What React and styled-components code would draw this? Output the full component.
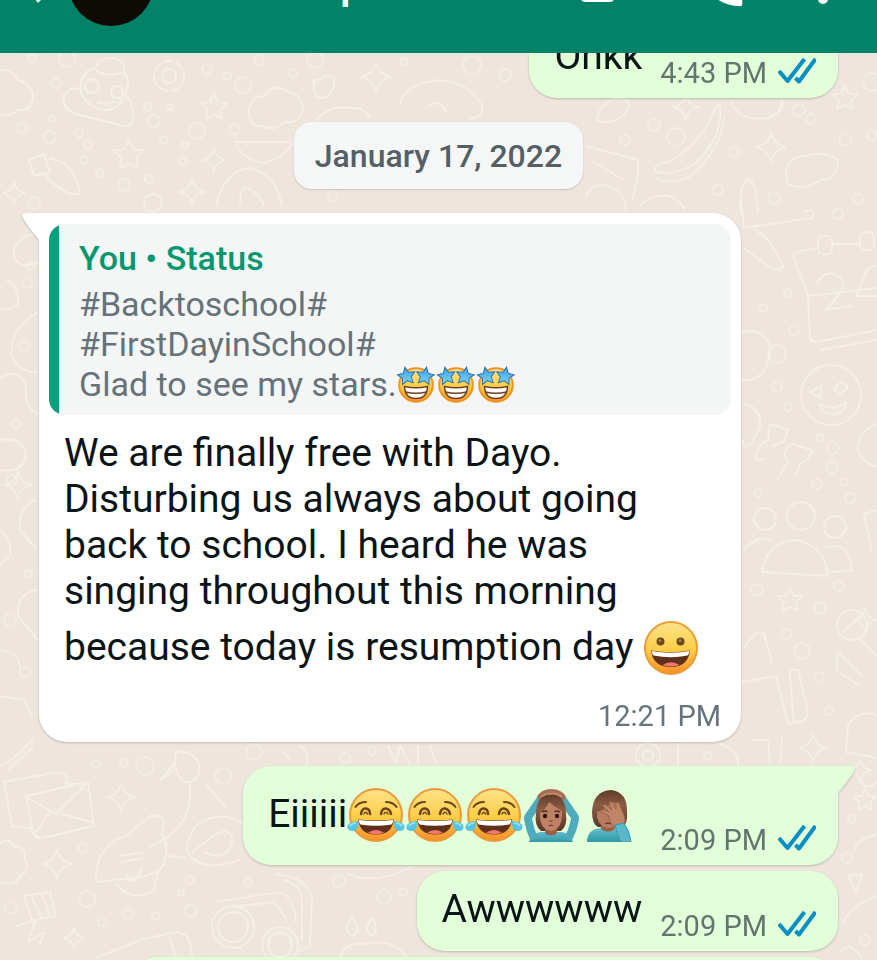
import React from 'react'
import styled, { createGlobalStyle } from 'styled-components'

const GlobalStyle = createGlobalStyle`
    * {
        box-sizing: border-box;
    }

    body {
        margin: 0;
        font-family: Roboto, "Noto Sans", sans-serif;
        color: #0b1417;
    }
`;

const Screen = styled.div`
    height: 100vh;
    display: flex;
    flex-direction: column;
    overflow: hidden;
    background: #eee6dd;
`;

const TopBar = styled.header`
    flex: none;
    height: 53px;
    display: flex;
    align-items: flex-end;
    overflow: hidden;
    background: #03826a;
    position: relative;
    z-index: 1;
`;

const Toolbar = styled.div`
    flex: 1;
    height: 140px;
    padding: 0 22px 0 12px;
    display: flex;
    align-items: center;
`;

const IconButton = styled.button`
    width: ${props => props.$width || 64}px;
    height: 64px;
    padding: 0;
    border: 0;
    background: none;
    color: #fff;

    svg {
        display: block;
        width: 100%;
        height: 100%;
    }
`;

const Avatar = styled.div`
    width: 86px;
    height: 86px;
    border-radius: 50%;
    background: #0e0b05;
`;

const ContactName = styled.h1`
    flex: 1;
    margin: 0;
    padding-left: 186px;
    font-size: 44px;
    line-height: 52px;
    font-weight: 500;
    color: #fff;
`;

const Actions = styled.div`
    display: flex;
    gap: 47px;
`;

const Chat = styled.main`
    flex: 1;
    min-height: 0;
    display: grid;
    grid-template: minmax(0, 1fr) / minmax(0, 1fr);

    > * {
        grid-area: 1 / 1;
    }
`;

const WallpaperSvg = styled.svg`
    width: 100%;
    height: 100%;
    fill: none;
    stroke: #f5efe8;
    stroke-width: 2;
    stroke-linecap: round;
    stroke-linejoin: round;
`;

// scrolled, so the first message is partly under the top bar
const Messages = styled.div`
    margin-top: -35px;
    padding: 0 39px;
    display: flex;
    flex-direction: column;
    align-items: flex-start;
    gap: 24px;
`;

const Group = styled.div`
    align-self: ${props => props.$align};
    max-width: 100%;
    display: flex;
    flex-direction: column;
    align-items: flex-end;
    gap: 6px;
`;

const DatePill = styled.time`
    align-self: center;
    padding: 16px 21px 15px;
    border-radius: 18px;
    background: #f5f7f7;
    box-shadow: 0 1px 2px rgba(0, 0, 0, 0.16);
    font-size: 32px;
    line-height: 36px;
    font-weight: 500;
    color: #545f66;
`;

const Bubble = styled.div`
    position: relative;
    flex: none;
    border-radius: 28px;
    filter: drop-shadow(0 1px 1px rgba(0, 0, 0, 0.2));
`;

const IncomingBubble = styled(Bubble)`
    max-width: 702px;
    padding: 11px 10px 8px;
    border-top-left-radius: 0;
    background: #fff;
`;

const OutgoingBubble = styled(Bubble)`
    min-width: ${props => props.$minWidth || 0}px;
    min-height: 80px;
    padding: 0 22px 7px 25px;
    display: flex;
    align-items: flex-end;
    gap: 18px;
    border-top-right-radius: ${props => props.$tail ? 0 : 28}px;
    background: #e3ffda;
`;

const TailSvg = styled.svg`
    position: absolute;
    top: 0;
    ${props => props.$side}: -17px;
    width: 18px;
    height: 28px;
`;

const Quote = styled.blockquote`
    margin: 0;
    padding: 14px 20px 11px 30px;
    border-radius: 16px;
    background: linear-gradient(90deg, #06a17d 10px, #f4f6f6 10px);
    font-size: 34px;
    line-height: 40px;
    color: #65727a;
`;

const QuoteAuthor = styled.div`
    margin-bottom: 6px;
    font-weight: 500;
    color: #06976f;
`;

const Text = styled.p`
    margin: 0;
    font-size: 39px;
    line-height: 46px;
`;

const IncomingText = styled(Text)`
    padding: 15px 15px 19px;
`;

const OutgoingText = styled(Text)`
    padding: 15px 0 12px;
    white-space: nowrap;
`;

const Meta = styled.div`
    display: flex;
    align-items: center;
    justify-content: flex-end;
    gap: 11px;
    font-size: 29px;
    line-height: 36px;
    white-space: nowrap;
    color: ${props => props.$outgoing ? '#62756f' : '#65747d'};
`;

const IncomingMeta = styled(Meta)`
    padding-right: 10px;
`;

const TicksSvg = styled.svg`
    width: 38px;
    height: 32px;
    fill: none;
    stroke: #0a8fc4;
    stroke-width: 4;
    stroke-linejoin: round;
`;

const EmojiSvg = styled.svg`
    width: ${props => props.$width || 59}px;
    height: 54px;
    margin: 7px 0 4px;
    vertical-align: -19px;
`;

const SmallEmojiSvg = styled.svg`
    width: 40px;
    height: 40px;
    vertical-align: -8px;
`;

const Ticks = () => (
    <TicksSvg viewBox="0 0 38 32" role="img" aria-label="Read">
        <path d="M1 14 L9.500 24 L26.500 2" />
        <path d="M17.500 21 L21 24.500 L37.500 2" />
    </TicksSvg>
)

const Tail = ({ side, color }) => (
    <TailSvg viewBox="0 0 18 28" $side={side} aria-hidden="true">
        <path
            d="M18 0 H4 Q-1 1 1 5 Q2 8 17 27 H18 Z"
            fill={color}
            transform={side === 'right' ? 'matrix(-1 0 0 1 18 0)' : undefined}
        />
    </TailSvg>
)

const EmojiDefs = () => (
    <svg width="0" height="0" style={{ display: 'block' }} aria-hidden="true">
        <defs>
            <linearGradient id="face" x1="0" y1="0" x2="0" y2="1">
                <stop offset="0" stopColor="#ffe38a" />
                <stop offset="0.55" stopColor="#fdcd45" />
                <stop offset="1" stopColor="#f58f28" />
            </linearGradient>
            <linearGradient id="star" x1="0" y1="0" x2="0" y2="1">
                <stop offset="0" stopColor="#3a9be6" />
                <stop offset="1" stopColor="#7cd4fb" />
            </linearGradient>
            <linearGradient id="hair" x1="0" y1="0" x2="0" y2="1">
                <stop offset="0" stopColor="#5f3b2b" />
                <stop offset="0.4" stopColor="#8a5c44" />
                <stop offset="1" stopColor="#5a3626" />
            </linearGradient>
            <linearGradient id="shirt" x1="0" y1="0" x2="0" y2="1">
                <stop offset="0" stopColor="#63bdcc" />
                <stop offset="1" stopColor="#3198aa" />
            </linearGradient>
        </defs>
    </svg>
)

const Grinning = () => (
    <EmojiSvg viewBox="0 0 56 54" $width={56} role="img" aria-label="Grinning face">
        <circle cx="28" cy="27" r="26" fill="url(#face)" stroke="#ec9c36" strokeWidth="2" />
        <circle cx="17.500" cy="20.500" r="4" fill="#6b4a1e" />
        <circle cx="37.500" cy="20.500" r="4" fill="#6b4a1e" />
        <circle cx="17" cy="19.500" r="1.300" fill="#b18a4c" />
        <circle cx="37" cy="19.500" r="1.300" fill="#b18a4c" />
        <path d="M8 29.500 Q28 33 47 29.500 Q45 46 28 46 Q10 46 8 29.500 Z" fill="#61301a" />
        <path d="M8.500 30 Q28 33.500 46.500 30 Q46 33 44.500 34.500 Q28 38 10.500 34.500 Q9 33 8.500 30 Z" fill="#fff" />
        <path d="M19.500 44 Q28 38.500 36.500 44 Q28 47 19.500 44 Z" fill="#f1776f" />
    </EmojiSvg>
)

const Joy = () => (
    <EmojiSvg viewBox="0 0 59 54" role="img" aria-label="Face with tears of joy">
        <circle cx="29" cy="27" r="26" fill="url(#face)" stroke="#ea9a3a" strokeWidth="2" />
        <g fill="none" stroke="#6b4417" strokeLinecap="round">
            <path d="M8.500 19 Q12 14 19 14" strokeWidth="2" />
            <path d="M39 14 Q46 14 49.500 19" strokeWidth="2" />
            <path d="M14 26 Q15 20 19 20.500 Q23 21 23 26" strokeWidth="2.500" />
            <path d="M34 26 Q35 20 39 20.500 Q43 21 44 26" strokeWidth="2.500" />
            <path d="M17 26 Q19 22.500 20.500 26 M37 26 Q39 22.500 41 26" strokeWidth="1.500" />
        </g>
        <path d="M11 31.500 Q29 33.500 47 31.500 Q45 46.500 29 46.500 Q13 46.500 11 31.500 Z" fill="#61301a" />
        <path d="M11.500 32 Q29 34 46.500 32 Q46 35 44.500 36.500 Q29 39 13.500 36.500 Q12 35 11.500 32 Z" fill="#fff" />
        <path d="M21 44.500 Q29 39.500 37 44.500 Q29 48 21 44.500 Z" fill="#f1776f" />
        <path d="M11 33 Q12 44 4.500 43 Q-1 42 1 37 Q3 33.500 11 33 Z" fill="#56c5e3" />
        <path d="M47 33 Q46 44 53.500 43 Q59 42 57 37 Q55 33.500 47 33 Z" fill="#56c5e3" />
        <path d="M3 38 Q5 35 9 35 M49 35 Q53 35 55 38" fill="none" stroke="#9be3f3" strokeWidth="1.500" />
    </EmojiSvg>
)

const STAR = 'M0 -9.500 L2.800 -3.500 L9.400 -2.800 L4.600 1.800 L5.800 8.200 L0 5.200 L-5.800 8.200 L-4.600 1.800 L-9.400 -2.800 L-2.800 -3.500 Z'

const StarStruck = () => (
    <SmallEmojiSvg viewBox="0 0 40 40" role="img" aria-label="Star-struck">
        <circle cx="19" cy="21" r="16.800" fill="url(#face)" stroke="#ef9524" strokeWidth="2" />
        <path d="M7.500 22.500 Q19 25 30.500 22.500 Q30 34.500 19 34.500 Q8 34.500 7.500 22.500 Z" fill="#fff" stroke="#6d4020" strokeWidth="1.500" />
        <path d="M8.500 28 Q19 30.500 29.500 28" fill="none" stroke="#6d4020" strokeWidth="1.500" />
        <path d={STAR} transform="translate(9.500 12) rotate(-10) scale(0.940)" fill="url(#star)" stroke="#2b6fa8" strokeWidth="1" />
        <path d={STAR} transform="translate(28 12) rotate(10) scale(0.940)" fill="url(#star)" stroke="#2b6fa8" strokeWidth="1" />
    </SmallEmojiSvg>
)

const WomanOk = () => (
    <EmojiSvg viewBox="0 0 60 54" $width={60} role="img" aria-label="Woman gesturing OK">
        <path d="M5 54 Q7 45 16 44 H38 Q47 45 49 54 Z" fill="url(#shirt)" />
        <path d="M10 51 Q6 42 4 31 Q4 28 7 25 L18 9" fill="none" stroke="#4fabbb" strokeWidth="8" />
        <path d="M44 51 Q49 42 51 31 Q51 28 48 25 L37 9" fill="none" stroke="#4fabbb" strokeWidth="8" />
        <path d="M13 9 Q17 1 27 1 Q38 1 42 9 L37 15 H18 Z" fill="#a96c54" />
        <path d="M27 6 Q42 7 42 26 Q44 37 37 43 H17 Q10 37 12 26 Q12 7 27 6 Z" fill="url(#hair)" />
        <path d="M21 38 H33 V45 Q27 50 21 45 Z" fill="#9b6249" />
        <path d="M16 25 Q22 21 25 14 Q31 19 38 23 Q39 41 27 43 Q15 41 16 25 Z" fill="#bd8163" />
        <path d="M18 24 Q21 22 23.500 24 M30.500 24 Q33 22 36 24" stroke="#50301f" strokeWidth="1.500" fill="none" />
        <circle cx="21" cy="28" r="2.200" fill="#2a1811" />
        <circle cx="33" cy="28" r="2.200" fill="#2a1811" />
        <path d="M25.500 32.500 Q27 34 28.500 32.500" fill="none" stroke="#865039" strokeWidth="1.300" />
        <path d="M24 38 Q27 35.500 30 38 Z" fill="#7a352e" />
        <path d="M17 9 Q22 5 26 6 Q32 4 38 9" fill="none" stroke="#c98f74" strokeWidth="1.500" />
    </EmojiSvg>
)

const WomanFacepalm = () => (
    <EmojiSvg viewBox="0 0 58 54" $width={58} role="img" aria-label="Woman facepalming">
        <path d="M3 54 Q3 41 17 40 H34 Q46 42 46 54 Z" fill="url(#shirt)" />
        <path d="M27 2 Q44 4 43 25 Q44 36 38 40 L14 39 Q8 36 8 24 Q9 3 27 2 Z" fill="url(#hair)" />
        <path d="M17 34 H30 V42 Q23 46 17 41 Z" fill="#9b6249" />
        <path d="M13 24 Q23 20 29 14 Q39 18 38 26 Q36 39 25 40 Q12 38 13 24 Z" fill="#b97b5f" />
        <path d="M21 36 Q24 34 27 36" stroke="#713b2d" strokeWidth="1.500" fill="none" />
        <path d="M31 39 Q24 34 25 28 L17 24 Q16 21 20 22 L25 24 L19 18 Q19 15 22 17 L28 22 L25 15 Q27 12 29 16 L32 21 L32 15 Q35 13 36 18 L40 27 Q42 33 40 39 Z" fill="#c08466" stroke="#99644c" strokeWidth="1" />
        <path d="M31 37 L40 35 Q46 44 47 54 H37 Q32 45 31 37 Z" fill="#5ab7c7" stroke="#3699aa" strokeWidth="1" />
    </EmojiSvg>
)

// small shapes scattered over the wallpaper: [x, y, radius]
const dots = [
    [32, 58, 4], [56, 83, 5], [67, 59, 8], [148, 107, 4], [170, 107, 3], [154, 121, 6], [52, 119, 3], [79, 133, 4],
    [50, 137, 6], [22, 128, 5], [88, 145, 4], [197, 131, 8], [235, 129, 5], [243, 85, 8], [227, 76, 4], [207, 69, 5],
    [164, 140, 4], [185, 145, 3], [100, 173, 4], [124, 185, 6], [149, 179, 4], [84, 160, 4], [183, 161, 4],
    [293, 73, 4], [259, 60, 5], [315, 60, 8], [404, 62, 4], [333, 196, 5], [34, 203, 6], [472, 65, 9], [505, 75, 6],
    [654, 125, 6], [625, 140, 5], [676, 137, 9], [734, 152, 5], [799, 110, 6], [845, 140, 6], [872, 135, 5],
    [718, 190, 5], [774, 198, 6], [858, 199, 5], [872, 82, 9], [811, 119, 5], [838, 214, 5], [788, 293, 4],
    [763, 308, 4], [794, 331, 5], [777, 354, 9], [777, 387, 5], [788, 407, 4], [820, 438, 4], [833, 448, 6],
    [832, 467, 6], [844, 482, 4], [850, 498, 5], [817, 484, 5], [758, 493, 4], [839, 586, 5], [757, 590, 6],
    [820, 608, 6], [787, 634, 5], [802, 651, 8], [708, 756, 4], [819, 677, 5], [829, 711, 4],
    [96, 764, 4], [124, 763, 4], [145, 766, 9], [223, 776, 8], [254, 752, 8], [345, 758, 5], [372, 751, 4],
    [83, 848, 5], [87, 899, 8], [11, 908, 6], [128, 914, 5], [156, 916, 4], [102, 922, 4], [248, 882, 4],
    [191, 911, 6], [190, 880, 4], [181, 893, 3], [339, 881, 6], [384, 897, 7], [403, 892, 4], [852, 819, 4],
    [847, 858, 5], [865, 940, 5], [24, 346, 5], [30, 266, 4], [27, 283, 5], [12, 480, 5], [28, 574, 4], [10, 620, 6],
    [16, 424, 4], [25, 672, 5]
]

const sparkles = [
    [376, 77, 15], [192, 192, 13], [214, 160, 12], [686, 107, 13], [771, 147, 15], [813, 748, 14], [121, 797, 14],
    [57, 864, 15], [74, 938, 11], [14, 193, 11], [18, 485, 14], [865, 620, 12], [860, 770, 11]
]

const stars = [
    [129, 155, 1.6], [214, 107, 1.4], [845, 98, 1.3], [790, 600, 1.3], [865, 800, 1.2]
]

const Wallpaper = () => (
    <WallpaperSvg viewBox="0 53 877 907" preserveAspectRatio="xMidYMin slice" aria-hidden="true">
        {dots.map(([x, y, r]) => <circle key={`${x}-${y}`} cx={x} cy={y} r={r} opacity="0.8" />)}
        {sparkles.map(([x, y, s]) => (
            <path
                key={`${x}-${y}`}
                d="M0 -1 Q0.150 -0.150 1 0 Q0.150 0.150 0 1 Q-0.150 0.150 -1 0 Q-0.150 -0.150 0 -1 Z"
                transform={`translate(${x} ${y}) scale(${s})`}
                strokeWidth={1.5 / s}
            />
        ))}
        {stars.map(([x, y, s]) => (
            <path key={`${x}-${y}`} d={STAR} transform={`translate(${x} ${y}) scale(${s})`} strokeWidth={1.8 / s} />
        ))}

        {/* cloud, hat, flower */}
        <path d="M0 70 Q14 70 18 80 Q34 86 33 98 Q30 112 18 110 Q8 118 0 114" />
        <path d="M64 95 Q72 85 82 90 M124 94 Q132 100 133 112 Q136 126 124 126 L84 116 Q60 112 64 95" />
        <path d="M82 96 Q76 72 96 68 Q98 58 112 58 Q126 60 124 72 Q132 82 124 96 Q118 110 106 110 Q92 110 82 96 Z" />
        <circle cx="92" cy="86" r="7" /><circle cx="117" cy="92" r="6" /><path d="M98 102 Q106 106 112 102 M96 71 Q110 78 124 72" />
        <circle cx="169" cy="76" r="7" /><circle cx="169" cy="76" r="15" strokeDasharray="9 4" />
        <path d="M249 112 Q250 96 264 96 Q274 82 288 92 Q306 96 302 112 Q298 124 284 122 Q276 132 262 126 Q250 128 249 112 Z" />
        <path d="M314 86 Q312 78 320 80 Q326 72 334 78 Q336 92 324 98 Q312 98 314 86 Z" />
        <path d="M316 120 Q330 104 352 108 Q366 108 370 118" />
        <path d="M400 104 Q404 84 440 80 Q472 84 482 106 Q484 118 470 118 M446 112 Q440 98 428 106" />
        <path d="M236 142 H290 M236 144 Q242 160 264 163 Q288 156 294 140 M216 206 Q224 170 250 168 Q276 174 282 206" />
        <path d="M240 204 Q240 182 252 190 Q260 196 264 206 M29 160 L44 154 L50 172 L34 176 Z M50 158 Q76 164 80 194 Q66 198 44 174" />
        <circle cx="153" cy="203" r="9" />

        {/* banana, glove, leaves */}
        <path d="M720 104 Q724 138 694 164 Q674 176 656 172 Q652 164 668 162 Q698 148 716 108 Z M724 118 Q720 152 690 176 Q672 186 656 178" />
        <path d="M597 120 Q600 100 622 98 Q634 102 624 114 Q612 126 597 120 Z M731 102 Q738 122 768 118 Q784 112 782 100" />
        <path d="M586 146 L638 160 Q640 176 632 200 M594 162 L624 180 M586 196 Q592 182 608 186 Q624 190 626 210 M640 206 Q650 194 668 196 Q682 200 684 210" />
        <path d="M786 172 Q788 156 806 156 Q824 150 838 160 Q838 180 820 180 Q804 192 788 184 Z M741 212 Q738 190 746 180 Q756 176 758 212" />
        <path d="M741 200 L744 228 L812 218 Q816 206 804 212 M756 230 L768 240 L784 266 Q778 272 768 266 L744 248" />

        {/* calendar */}
        <path d="M832 244 H858 M816 248 L796 252 Q793 254 794 258 L808 296 L810 338 Q811 342 816 342 L877 330 M808 296 L877 288 M820 350 L877 340" />
        <rect x="818" y="236" width="14" height="18" rx="5" /><rect x="860" y="232" width="14" height="18" rx="5" />
        <path d="M816 284 Q826 268 838 276 Q848 284 838 296 L826 310 L852 306 M856 296 L868 268 L877 266 M856 296 H877" />

        {/* round face, cactus, people */}
        <circle cx="831" cy="395" r="30" />
        <path d="M810 392 L822 386 L820 398 Z M834 390 Q842 376 848 388 L840 394 Z M820 404 Q834 412 846 402 Q844 416 830 414 Q820 412 820 404" />
        <path d="M742 332 Q764 328 770 346 M742 380 Q768 382 770 350 M744 404 Q762 408 760 428 L752 442 Q744 452 742 440" />
        <path d="M756 458 Q758 444 768 440 L770 424 L788 430 L784 442 L772 446 M778 478 L788 462 Q780 452 792 444 L812 450 Q812 458 800 464 L796 476 M765 459 L757 460" />
        <circle cx="765" cy="519" r="11" /><circle cx="801" cy="516" r="14" /><circle cx="835" cy="527" r="11" />
        <path d="M762 572 Q766 542 796 540 Q826 546 828 576 Z M744 550 Q758 534 772 540 M824 548 Q850 540 852 570 L832 572" />
        <path d="M877 424 Q856 432 858 452 Q866 466 877 466 M877 510 L864 514 L872 552" />

        {/* rattle, boat, bars */}
        <circle cx="852" cy="625" r="15" /><path d="M842 632 L862 616 M860 640 L877 656 M838 652 L862 676 M838 652 L836 670 L860 686" />
        <path d="M744 648 Q758 626 764 634 L772 662 M742 682 L776 676 L788 724 L800 722 M790 676 Q788 668 798 670 L808 712 Q806 724 794 722 Z" />
        <path d="M753 740 L768 740 L770 764 M782 738 L780 764 M848 724 L846 752 L877 758 M848 724 Q862 708 877 716" />
        <circle cx="648" cy="755" r="12" /><circle cx="648" cy="755" r="5" /><path d="M678 744 V766 M720 744 Q740 750 738 766" />

        {/* left column */}
        <path d="M38 232 Q12 238 14 258 Q22 270 38 262 M6 280 Q18 282 18 304 Q8 312 0 308 M38 312 Q8 330 12 356 Q20 374 38 372" />
        <path d="M0 378 Q22 366 26 388 Q24 408 38 414 M0 440 Q24 436 26 456 Q22 474 0 470 M36 500 Q18 506 20 530 L36 548 M0 530 Q12 540 10 556 L0 564" />
        <path d="M38 590 Q16 592 18 616 L38 640 M0 650 Q20 652 20 668 M0 696 L24 700 L32 716" />

        {/* envelope */}
        <path d="M2 766 L14 758 L34 738 M8 770 L34 746 M4 782 L58 772 Q70 774 66 784 L84 784 M4 782 L12 826 L30 828" />
        <path d="M26 796 L88 782 L94 826 L42 838 Q32 838 32 826 Z M28 798 L56 814 L86 784 M36 832 L50 812 M62 814 L92 822" />
        <path d="M0 844 Q8 836 14 846 Q28 848 24 858 Q32 870 20 876 Q14 888 4 882 L0 884" />

        {/* bird, rocket, bus */}
        <path d="M176 752 Q196 750 200 768 Q198 784 184 782 Q172 772 176 752 Z M172 772 L160 780 L174 764 M190 784 Q194 830 150 846" />
        <path d="M206 784 L226 808 M96 876 Q98 844 126 836 L150 816 Q168 812 162 834 Q172 852 160 870 Q150 876 134 878 L96 882 Z" />
        <path d="M120 856 L144 852 M122 862 L142 858 M126 874 Q134 890 142 868 M158 872 L154 890 Q134 904 116 884 M170 856 L186 858" />
        <path d="M242 822 Q216 810 196 826 Q182 846 190 856 Q204 872 240 860 M192 852 L216 834 Q234 826 232 844 Q224 862 204 852" />
        <path d="M24 896 L50 892 L56 916 L32 920 Z M16 926 L36 920 L28 942 L44 932 L40 944 M32 898 L42 918 M42 894 L50 916" />
        <circle cx="233" cy="927" r="21" /><circle cx="233" cy="927" r="15" /><circle cx="280" cy="945" r="18" /><circle cx="280" cy="945" r="12" />
        <path d="M216 902 L280 892 Q294 896 296 922 M240 906 L274 902 L286 918 M276 874 Q310 878 312 900 L310 946 L298 952 M284 880 Q302 884 302 904 V940" />
        <path d="M96 958 L140 940 L176 932 Q192 932 192 958 M170 938 L176 958 M348 874 Q376 886 412 866" />
        <path d="M352 918 Q342 930 352 936 Q364 930 352 918 Z M372 918 Q362 930 372 936 Q380 930 372 918 Z M340 956 Q348 940 366 944 Q392 938 406 956" />
        <path d="M282 750 L290 760 M300 746 Q312 754 306 766 M388 746 L396 762 L400 746 L410 764 M418 746 V764 M430 746 L436 764" />
        <path d="M860 780 Q866 792 877 782 M877 834 Q852 842 856 850 M848 876 L862 874 L856 892 Z M877 896 Q846 908 844 924 M840 952 Q850 940 862 958" />
    </WallpaperSvg>
)

const Header = () => (
    <TopBar>
        <Toolbar>
            <IconButton $width={56} aria-label="Back">
                <svg viewBox="0 0 56 64">
                    <path d="M49 32 H10 M28 50 L10 32 L28 14" fill="none" stroke="currentColor" strokeWidth="5" />
                </svg>
            </IconButton>
            <Avatar />
            <ContactName>p</ContactName>
            <Actions>
                <IconButton aria-label="Video call">
                    <svg viewBox="0 0 64 64" fill="currentColor">
                        <path d="M16 22 H41 Q45 22 45 26 V32 L54 24 V46 L45 38 V47 Q45 51 41 51 H16 Q12 51 12 47 V26 Q12 22 16 22 Z" />
                    </svg>
                </IconButton>
                <IconButton aria-label="Voice call">
                    <svg viewBox="0 0 64 64" fill="currentColor">
                        <path
                            d="M20.010 15.380c-1.230 0-2.420-.2-3.530-.56-.35-.12-.74-.03-1.010.24l-1.570 1.970c-2.830-1.350-5.480-3.900-6.890-6.830l1.950-1.660c.27-.28.35-.67.24-1.020-.37-1.110-.56-2.300-.56-3.530 0-.54-.45-.99-.99-.99H4.190C3.650 3 3 3.240 3 3.990 3 13.280 10.730 21 20.010 21c.71 0 .99-.63.99-1.180v-3.450c0-.54-.45-.99-.99-.99z"
                            transform="translate(12.500 5.500) scale(2.370)"
                        />
                    </svg>
                </IconButton>
                <IconButton aria-label="More options">
                    <svg viewBox="0 0 64 64" fill="currentColor">
                        <circle cx="32" cy="18" r="5" />
                        <circle cx="32" cy="33" r="5" />
                        <circle cx="32" cy="48" r="5" />
                    </svg>
                </IconButton>
            </Actions>
        </Toolbar>
    </TopBar>
)

const OutgoingMessage = ({ children, time, tail }) => (
    <OutgoingBubble $tail={tail}>
        {tail && <Tail side="right" color="#e3ffda" />}
        <OutgoingText>{children}</OutgoingText>
        <Meta $outgoing>
            <time>{time}</time>
            <Ticks />
        </Meta>
    </OutgoingBubble>
)

const App = () => {
    return (
        <>
        <GlobalStyle />
        <Screen>
            <EmojiDefs />
            <Header />
            <Chat>
                <Wallpaper />
                <Messages>
                    <Group $align="flex-end">
                        <OutgoingMessage time="4:43 PM">Ohkk</OutgoingMessage>
                    </Group>

                    <DatePill dateTime="2022-01-17">January 17, 2022</DatePill>

                    <Group $align="flex-start">
                        <IncomingBubble>
                            <Tail side="left" color="#fff" />
                            <Quote>
                                <QuoteAuthor>You • Status</QuoteAuthor>
                                <div>#Backtoschool#</div>
                                <div>#FirstDayinSchool#</div>
                                <div>Glad to see my stars.<StarStruck /><StarStruck /><StarStruck /></div>
                            </Quote>
                            <IncomingText>
                                We are finally free with Dayo.<br />
                                Disturbing us always about going back to school. I heard he was
                                singing throughout this morning because today is resumption day <Grinning />
                            </IncomingText>
                            <IncomingMeta><time>12:21 PM</time></IncomingMeta>
                        </IncomingBubble>
                    </Group>

                    <Group $align="flex-end">
                        <OutgoingMessage time="2:09 PM" tail>
                            Eiiiiii<Joy /><Joy /><Joy /><WomanOk /><WomanFacepalm />
                        </OutgoingMessage>
                        <OutgoingMessage time="2:09 PM">Awwwwww</OutgoingMessage>
                        <OutgoingBubble $minWidth={708} />
                    </Group>
                </Messages>
            </Chat>
        </Screen>
        </>
    )
}

export default App
